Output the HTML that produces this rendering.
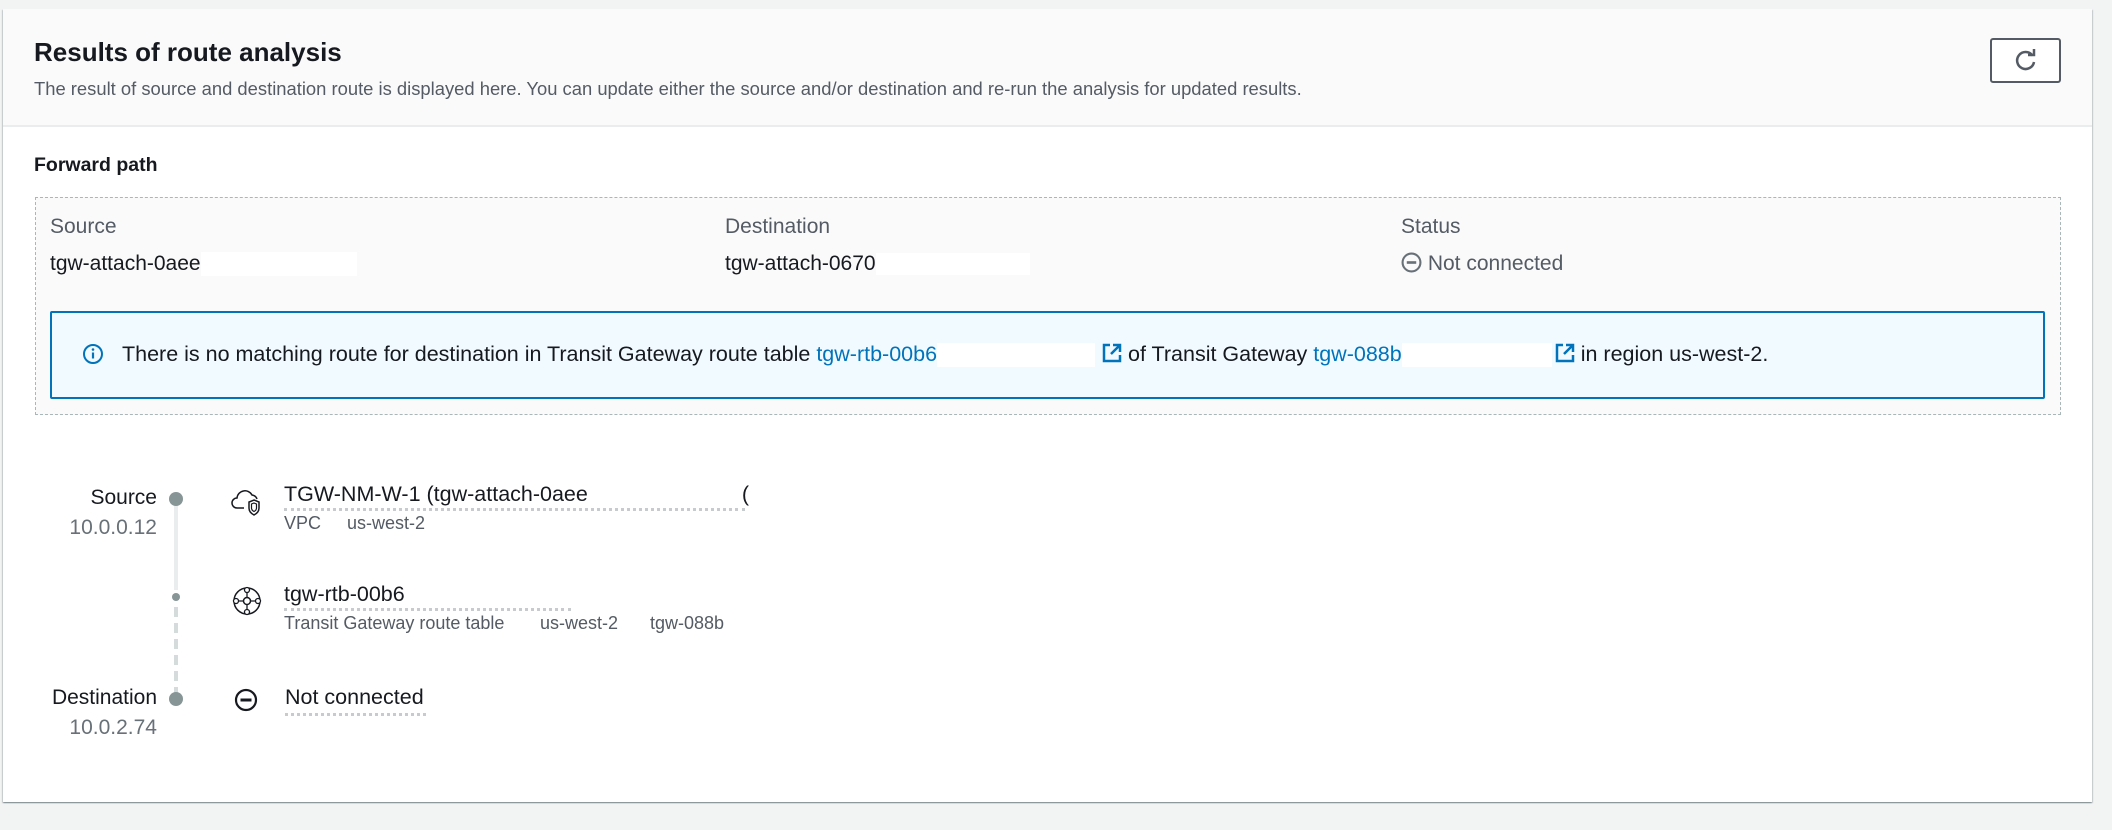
<!DOCTYPE html>
<html><head><meta charset="utf-8"><style>
*{box-sizing:border-box;margin:0;padding:0}
body{width:2112px;height:830px;background:#f2f3f3;font-family:"Liberation Sans",Arial,sans-serif;color:#16191f;position:relative;overflow:hidden}
.a{position:absolute;white-space:nowrap}
.card{position:absolute;left:3px;top:9px;width:2089px;height:793px;background:#fff;box-shadow:0 1px 1px rgba(0,28,36,.3),1px 1px 1px rgba(0,28,36,.15),-1px 1px 1px rgba(0,28,36,.15)}
.hdr{position:absolute;left:3px;top:9px;width:2089px;height:118px;background:#fafafa;border-bottom:2px solid #eaeded}
.lab{color:#545b64;font-size:21px}
.val{font-size:21px}
.link{color:#0073bb}
.wb{display:inline-block;background:#fff;vertical-align:middle}
.ul{position:absolute;border-top:3px dotted #c8cbcd;height:0}
.sub{color:#545b64;font-size:18px}
.dot{position:absolute;border-radius:50%;background:#879596}
</style></head><body>
<div class="card"></div>
<div class="hdr"></div>
<div class="a" style="left:34px;top:37px;font-size:26px;font-weight:bold">Results of route analysis</div>
<div class="a" style="left:34px;top:78px;font-size:18.4px;color:#545b64">The result of source and destination route is displayed here. You can update either the source and/or destination and re-run the analysis for updated results.</div>
<div class="a" style="left:1990px;top:38px;width:71px;height:45px;border:2px solid #545b64;border-radius:3px;background:#fff">
<svg width="67" height="41" viewBox="0 0 67 41"><path d="M40.5 15.5 A8.5 8.5 0 1 0 42 22" fill="none" stroke="#545b64" stroke-width="2.5"/><path d="M36 15 L42 15 L42 9" fill="none" stroke="#545b64" stroke-width="2.5"/></svg></div>

<div class="a" style="left:34px;top:154px;font-size:19.5px;font-weight:bold">Forward path</div>
<div class="a" style="left:35px;top:197px;width:2026px;height:218px;border:1px dashed #aab7b8;background:#fafafa"></div>
<div class="a lab" style="left:50px;top:215px">Source</div>
<div class="a val" style="left:50px;top:252px">tgw-attach-0aee<span class="wb" style="width:156px;height:24px"></span></div>
<div class="a lab" style="left:725px;top:215px">Destination</div>
<div class="a val" style="left:725px;top:252px">tgw-attach-0670<span class="wb" style="width:154px;height:22px"></span></div>
<div class="a lab" style="left:1401px;top:215px">Status</div>
<div class="a lab" style="left:1401px;top:252px"><svg width="21" height="21" viewBox="0 0 20 20" style="vertical-align:-3px"><circle cx="10" cy="10" r="8.5" fill="none" stroke="#687078" stroke-width="2"/><path d="M5.5 10h9" stroke="#687078" stroke-width="2.5"/></svg> Not connected</div>

<div class="a" style="left:50px;top:311px;width:1995px;height:88px;border:2px solid #0073bb;background:#f1faff;border-radius:2px"></div>
<div class="a val" style="left:82px;top:342px;font-size:21.5px">
<svg width="22" height="22" viewBox="0 0 22 22" style="vertical-align:-4px"><circle cx="11" cy="11" r="9" fill="none" stroke="#0073bb" stroke-width="2"/><path d="M11 9.5v6" stroke="#0073bb" stroke-width="2.2"/><circle cx="11" cy="6.5" r="1.3" fill="#0073bb"/></svg>
<span style="margin-left:12px">There is no matching route for destination in Transit Gateway route table </span><span class="link">tgw-rtb-00b6</span><span class="wb" style="width:158px;height:24px"></span><svg width="22" height="22" viewBox="0 0 22 22" style="vertical-align:-3px;margin:0 5px 0 6px"><path d="M9 3H3v16h16v-6" fill="none" stroke="#0073bb" stroke-width="2.5"/><path d="M12 3h7v7M19 3l-9 9" fill="none" stroke="#0073bb" stroke-width="2.5"/></svg>of Transit Gateway <span class="link">tgw-088b</span><span class="wb" style="width:150px;height:24px"></span><svg width="22" height="22" viewBox="0 0 22 22" style="vertical-align:-3px;margin:0 5px 0 2px"><path d="M9 3H3v16h16v-6" fill="none" stroke="#0073bb" stroke-width="2.5"/><path d="M12 3h7v7M19 3l-9 9" fill="none" stroke="#0073bb" stroke-width="2.5"/></svg>in region us-west-2.</div>

<!-- path diagram -->
<div class="a" style="left:174px;top:505px;width:4px;height:85px;background:#eaeded"></div>
<div class="a" style="left:174px;top:607px;width:4px;height:86px;background:repeating-linear-gradient(#d5dbdb 0 10px,transparent 10px 16px)"></div>
<div class="dot" style="left:169px;top:492px;width:14px;height:14px"></div>
<div class="dot" style="left:172px;top:593px;width:8px;height:8px"></div>
<div class="dot" style="left:169px;top:692px;width:14px;height:14px"></div>
<div class="a" style="right:1955px;top:486px;font-size:21px">Source</div>
<div class="a" style="right:1955px;top:516px;font-size:21px;color:#687078">10.0.0.12</div>
<div class="a" style="right:1955px;top:686px;font-size:21px">Destination</div>
<div class="a" style="right:1955px;top:716px;font-size:21px;color:#687078">10.0.2.74</div>

<svg class="a" style="left:230px;top:488px" width="34" height="28" viewBox="0 0 34 28"><path d="M14 20H7a5 5 0 0 1 0-10 8 8 0 0 1 15-3 6 6 0 0 1 5 4" fill="none" stroke="#16191f" stroke-width="1.5"/><path d="M24 12l5 2v6c0 4-3 6-5 7-2-1-5-3-5-7v-6z" fill="#fff" stroke="#16191f" stroke-width="1.5"/><path d="M24 15l2.5 1v4c0 2-1.5 3-2.5 3.5-1-.5-2.5-1.5-2.5-3.5v-4z" fill="none" stroke="#16191f" stroke-width="1.2"/></svg>
<div class="a" style="left:284px;top:482px;font-size:21.5px">TGW-NM-W-1 (tgw-attach-0aee<span class="wb" style="width:154px;height:22px"></span>(</div>
<div class="ul" style="left:284px;top:508px;width:461px"></div>
<div class="a sub" style="left:284px;top:513px">VPC</div>
<div class="a sub" style="left:347px;top:513px">us-west-2</div>

<svg class="a" style="left:231px;top:585px" width="32" height="32" viewBox="0 0 32 32"><circle cx="16" cy="16" r="13" fill="none" stroke="#16191f" stroke-width="1.5"/><circle cx="16" cy="16" r="3.5" fill="none" stroke="#16191f" stroke-width="1.5"/><circle cx="16" cy="5" r="2.5" fill="#fff" stroke="#16191f" stroke-width="1.3"/><circle cx="16" cy="27" r="2.5" fill="#fff" stroke="#16191f" stroke-width="1.3"/><circle cx="5" cy="16" r="2.5" fill="#fff" stroke="#16191f" stroke-width="1.3"/><circle cx="27" cy="16" r="2.5" fill="#fff" stroke="#16191f" stroke-width="1.3"/><path d="M16 7.5v5M16 19.5v5M7.5 16h5M19.5 16h5" stroke="#16191f" stroke-width="1.3"/></svg>
<div class="a" style="left:284px;top:582px;font-size:21.5px">tgw-rtb-00b6</div>
<div class="ul" style="left:284px;top:608px;width:287px"></div>
<div class="a sub" style="left:284px;top:613px">Transit Gateway route table</div>
<div class="a sub" style="left:540px;top:613px">us-west-2</div>
<div class="a sub" style="left:650px;top:613px">tgw-088b</div>

<svg class="a" style="left:234px;top:688px" width="24" height="24" viewBox="0 0 24 24"><circle cx="12" cy="12" r="10" fill="none" stroke="#16191f" stroke-width="2.2"/><path d="M6.5 12h11" stroke="#16191f" stroke-width="3"/></svg>
<div class="a" style="left:285px;top:685px;font-size:21.5px">Not connected</div>
<div class="ul" style="left:285px;top:713px;width:141px"></div>
</body></html>
